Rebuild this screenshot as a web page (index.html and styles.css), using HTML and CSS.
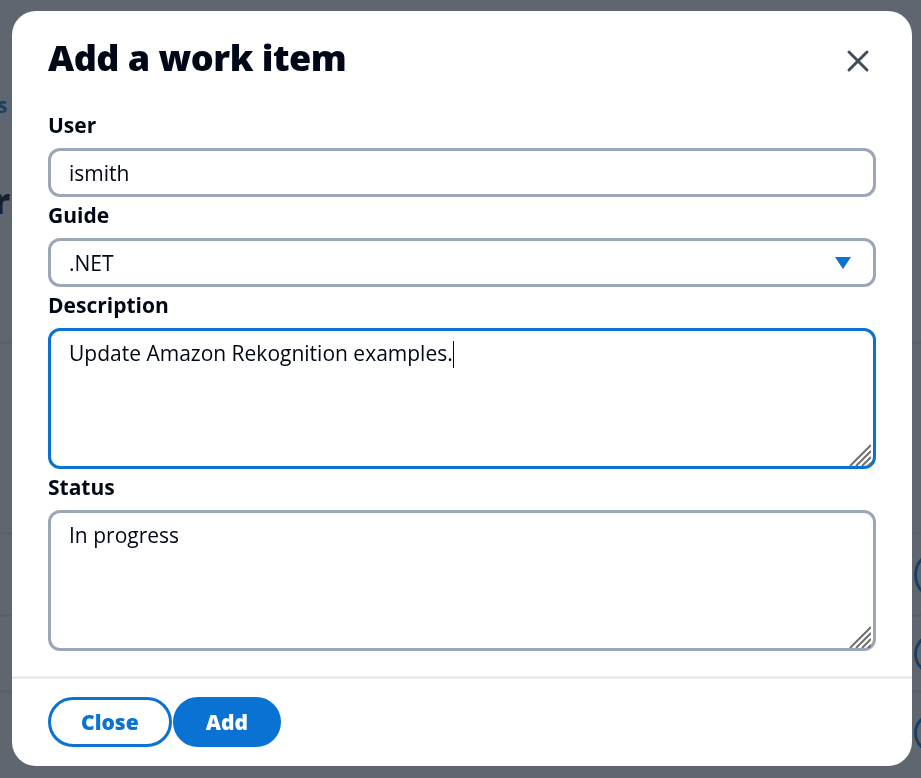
FILE: index.html
```html
<!DOCTYPE html>
<html lang="en">
<head>
<meta charset="utf-8">
<title>Add a work item</title>
<link rel="stylesheet" href="styles.css">
</head>
<body>
  <div class="page" aria-hidden="true">
    <a class="page-link" href="#">Items</a>
    <h1 class="page-title">Work items</h1>
    <div class="page-table">
      <div class="row row-a"></div>
      <div class="row row-b"><span class="ring ring-lg"></span></div>
      <div class="row row-c"><span class="ring ring-md"></span></div>
      <div class="row row-d"><span class="ring ring-sm"></span></div>
    </div>
  </div>

  <div class="overlay">
    <div class="modal" role="dialog" aria-labelledby="modal-title">
      <div class="modal-header">
        <h2 class="modal-title" id="modal-title">Add a work item</h2>
        <button class="dismiss" type="button" aria-label="Close modal">
          <svg width="24" height="24" viewBox="0 0 24 24" aria-hidden="true">
            <path d="M3 3 L21 21 M21 3 L3 21" fill="none" stroke="#414d5c" stroke-width="3" stroke-linecap="round"/>
          </svg>
        </button>
      </div>

      <div class="modal-body">
        <div class="field">
          <label class="field-label" for="user">User</label>
          <input class="input" id="user" type="text" value="ismith">
        </div>
        <div class="field">
          <span class="field-label">Guide</span>
          <button class="input select" type="button">
            <span>.NET</span>
            <svg width="24" height="24" viewBox="0 0 24 24" aria-hidden="true">
              <path d="M4 6 L20 6 L12 18 Z" fill="#0972d3"/>
            </svg>
          </button>
        </div>
        <div class="field">
          <span class="field-label">Description</span>
          <div class="textarea is-focused" role="textbox" aria-multiline="true">Update Amazon Rekognition examples.<span class="caret"></span>
            <svg class="grip" width="22" height="22" viewBox="0 0 22 22" aria-hidden="true">
              <path d="M22 1 L1 22 M22 7 L7 22 M22 13 L13 22 M22 19 L19 22" stroke="#6f6f6f" stroke-width="2" fill="none"/>
            </svg>
          </div>
        </div>
        <div class="field">
          <span class="field-label">Status</span>
          <div class="textarea" role="textbox" aria-multiline="true">In progress
            <svg class="grip" width="22" height="22" viewBox="0 0 22 22" aria-hidden="true">
              <path d="M22 1 L1 22 M22 7 L7 22 M22 13 L13 22 M22 19 L19 22" stroke="#6f6f6f" stroke-width="2" fill="none"/>
            </svg>
          </div>
        </div>
      </div>

      <div class="modal-footer">
        <button class="btn btn-normal" type="button">Close</button>
        <button class="btn btn-primary" type="button">Add</button>
      </div>
    </div>
  </div>
</body>
</html>
```

FILE: styles.css
```css
* {
  box-sizing: border-box;
}

html,
body {
  margin: 0;
  height: 100%;
}

body {
  font-family: "Open Sans", "Noto Sans", sans-serif;
  color: #000716;
  background: #ffffff;
  overflow: hidden;
}

/* underlying page (covered by the overlay) */
.page {
  height: 100vh;
  overflow: hidden;
  padding-top: 90px;
}

.page-link {
  display: block;
  margin-left: -52px;
  color: #0972d3;
  font-size: 21px;
  line-height: 30px;
  font-weight: 700;
  text-decoration: none;
}

.page-title {
  margin: 57px 0 0 -67px;
  font-size: 36px;
  line-height: 48px;
  font-weight: 800;
  color: #000716;
}

.page-table {
  margin-top: 116px;
}

.row {
  border-top: 3px solid #e9ebed;
  display: flex;
  justify-content: flex-end;
  align-items: center;
}

.row-a { height: 191px; }
.row-b { height: 82px; }
.row-c { height: 76px; }
.row-d { height: 82px; }

.ring {
  display: block;
  border: 3px solid #0972d3;
  border-radius: 50%;
}

.ring-lg { width: 50px; height: 50px; margin-right: -43px; }
.ring-md { width: 42px; height: 42px; margin-right: -35px; }
.ring-sm { width: 40px; height: 40px; margin-right: -33px; }

/* overlay + modal */
.overlay {
  position: fixed;
  inset: 0;
  background: rgba(35, 43, 55, 0.72);
  padding: 11px 9px 0 12px;
}

.modal {
  width: 900px;
  background: #ffffff;
  border-radius: 24px;
  display: flex;
  flex-direction: column;
  overflow: hidden;
}

.modal-header {
  display: flex;
  justify-content: space-between;
  align-items: flex-start;
  padding: 23px 36px 0 36px;
}

.modal-title {
  margin: 0;
  font-size: 36px;
  line-height: 48px;
  font-weight: 800;
  letter-spacing: -0.5px;
  color: #000716;
}

.dismiss {
  margin: 9px 0 0 0;
  padding: 6px;
  border: 0;
  background: none;
  display: flex;
  cursor: pointer;
}

.modal-body {
  padding: 28px 36px 25px;
  display: flex;
  flex-direction: column;
  gap: 3px;
}

.field {
  display: flex;
  flex-direction: column;
  gap: 8px;
}

.field-label {
  font-size: 21px;
  line-height: 30px;
  font-weight: 700;
  color: #000716;
}

.input {
  width: 100%;
  height: 49px;
  border: 3px solid #9ba7b6;
  border-radius: 12px;
  padding: 0 18px;
  font-family: inherit;
  font-size: 21px;
  line-height: 30px;
  color: #000716;
  background: #ffffff;
  outline: none;
}

.select {
  display: flex;
  align-items: center;
  justify-content: space-between;
  text-align: left;
  cursor: pointer;
}

.select svg {
  display: block;
}

.textarea {
  position: relative;
  height: 141px;
  border: 3px solid #9ba7b6;
  border-radius: 12px;
  padding: 7px 18px 6px;
  font-size: 21px;
  line-height: 30px;
  color: #000716;
}

.textarea.is-focused {
  border-color: #0972d3;
}

.caret {
  display: inline-block;
  width: 1px;
  height: 27px;
  background: #000716;
  vertical-align: -7px;
}

.grip {
  position: absolute;
  right: 2px;
  bottom: 0;
}

.modal-footer {
  border-top: 3px solid #e9ebed;
  padding: 18px 36px 19px;
  display: flex;
  gap: 1px;
}

.btn {
  font-family: inherit;
  font-size: 21px;
  line-height: 30px;
  font-weight: 800;
  padding: 7px 30px;
  border: 3px solid #0972d3;
  border-radius: 30px;
  cursor: pointer;
}

.btn-normal {
  background: #ffffff;
  color: #0972d3;
}

.btn-primary {
  background: #0972d3;
  color: #ffffff;
}
```
